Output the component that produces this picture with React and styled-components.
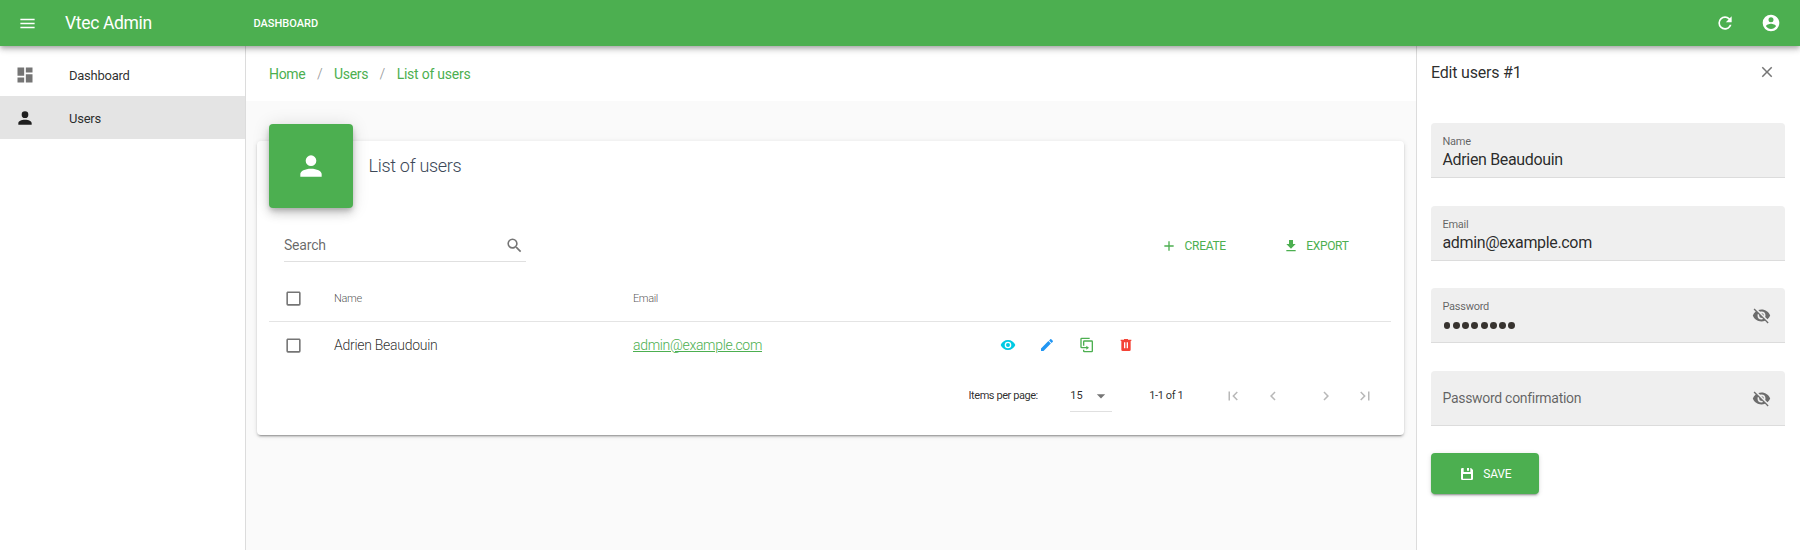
import React from "react";
import styled, { createGlobalStyle } from "styled-components";

const GREEN = "#4caf50";

const GlobalStyle = createGlobalStyle`
  *, *::before, *::after { box-sizing: border-box; }
  body {
    margin: 0;
    background: #fafafa;
    font-family: Roboto, "Liberation Sans", sans-serif;
    overflow: hidden;
  }
`;

const PATHS = {
  menu: "M3,6H21V8H3V6M3,11H21V13H3V11M3,16H21V18H3V16Z",
  dashboard: "M13,3V9H21V3M13,21H21V11H13M3,21H11V15H3M3,13H11V3H3V13Z",
  account:
    "M12,4A4,4 0 0,1 16,8A4,4 0 0,1 12,12A4,4 0 0,1 8,8A4,4 0 0,1 12,4M12,14C16.42,14 20,15.79 20,18V20H4V18C4,15.79 7.58,14 12,14Z",
  refresh:
    "M17.65,6.35C16.2,4.9 14.21,4 12,4A8,8 0 0,0 4,12A8,8 0 0,0 12,20C15.73,20 18.84,17.45 19.73,14H17.65C16.83,16.33 14.61,18 12,18A6,6 0 0,1 6,12A6,6 0 0,1 12,6C13.66,6 15.14,6.69 16.22,7.78L13,11H20V4L17.65,6.35Z",
  accountCircle:
    "M12,19.2C9.5,19.2 7.29,17.92 6,16C6.03,14 10,12.9 12,12.9C14,12.9 17.97,14 18,16C16.71,17.92 14.5,19.2 12,19.2M12,5A3,3 0 0,1 15,8A3,3 0 0,1 12,11A3,3 0 0,1 9,8A3,3 0 0,1 12,5M12,2A10,10 0 0,0 2,12A10,10 0 0,0 12,22A10,10 0 0,0 22,12C22,6.47 17.5,2 12,2Z",
  magnify:
    "M9.5,3A6.5,6.5 0 0,1 16,9.5C16,11.11 15.41,12.59 14.44,13.73L14.71,14H15.5L20.5,19L19,20.5L14,15.5V14.71L13.73,14.44C12.59,15.41 11.11,16 9.5,16A6.5,6.5 0 0,1 3,9.5A6.5,6.5 0 0,1 9.5,3M9.5,5C7,5 5,7 5,9.5C5,12 7,14 9.5,14C12,14 14,12 14,9.5C14,7 12,5 9.5,5Z",
  checkbox:
    "M19,3H5C3.89,3 3,3.89 3,5V19A2,2 0 0,0 5,21H19A2,2 0 0,0 21,19V5C21,3.89 20.1,3 19,3M19,5V19H5V5H19Z",
  plus: "M19,13H13V19H11V13H5V11H11V5H13V11H19V13Z",
  download: "M5,20H19V18H5M19,9H15V3H9V9H5L12,16L19,9Z",
  eye: "M12,9A3,3 0 0,0 9,12A3,3 0 0,0 12,15A3,3 0 0,0 15,12A3,3 0 0,0 12,9M12,17A5,5 0 0,1 7,12A5,5 0 0,1 12,7A5,5 0 0,1 17,12A5,5 0 0,1 12,17M12,4.5C7,4.5 2.73,7.61 1,12C2.73,16.39 7,19.5 12,19.5C17,19.5 21.27,16.39 23,12C21.27,7.61 17,4.5 12,4.5Z",
  eyeOff:
    "M11.83,9L15,12.16C15,12.11 15,12.05 15,12A3,3 0 0,0 12,9C11.94,9 11.89,9 11.83,9M7.53,9.8L9.08,11.35C9.03,11.56 9,11.77 9,12A3,3 0 0,0 12,15C12.22,15 12.44,14.97 12.65,14.92L14.2,16.47C13.53,16.8 12.79,17 12,17A5,5 0 0,1 7,12C7,11.21 7.2,10.47 7.53,9.8M2,4.27L4.28,6.55L4.73,7C3.08,8.3 1.78,10 1,12C2.73,16.39 7,19.5 12,19.5C13.55,19.5 15.03,19.2 16.38,18.66L16.81,19.08L19.73,22L21,20.73L3.27,3M12,7A5,5 0 0,1 17,12C17,12.64 16.87,13.26 16.64,13.82L19.57,16.75C21.07,15.5 22.27,13.86 23,12C21.27,7.61 17,4.5 12,4.5C10.6,4.5 9.26,4.75 8,5.2L10.17,7.35C10.74,7.13 11.35,7 12,7Z",
  pencil:
    "M20.71,7.04C21.1,6.65 21.1,6 20.71,5.63L18.37,3.29C18,2.9 17.35,2.9 16.96,3.29L15.12,5.12L18.87,8.87M3,17.25V21H6.75L17.81,9.93L14.06,6.18L3,17.25Z",
  duplicate:
    "M11,17H4A2,2 0 0,1 2,15V3A2,2 0 0,1 4,1H16V3H4V15H11V13L15,16L11,19V17M19,21V7H8V13H6V7A2,2 0 0,1 8,5H19A2,2 0 0,1 21,7V21A2,2 0 0,1 19,23H8A2,2 0 0,1 6,21V19H8V21H19Z",
  trash:
    "M9,3V4H4V6H5V19A2,2 0 0,0 7,21H17A2,2 0 0,0 19,19V6H20V4H15V3H9M9,8H11V17H9V8M13,8H15V17H13V8Z",
  menuDown: "M7,10L12,15L17,10H7Z",
  first: "M18.41,16.59L13.82,12L18.41,7.41L17,6L11,12L17,18L18.41,16.59M6,6H8V18H6V6Z",
  prev: "M15.41,16.58L10.83,12L15.41,7.41L14,6L8,12L14,18L15.41,16.58Z",
  next: "M8.59,16.58L13.17,12L8.59,7.41L10,6L16,12L10,18L8.59,16.58Z",
  last: "M5.59,7.41L10.18,12L5.59,16.59L7,18L13,12L7,6L5.59,7.41M16,6H18V18H16V6Z",
  close:
    "M19,6.41L17.59,5L12,10.59L6.41,5L5,6.41L10.59,12L5,17.59L6.41,19L12,13.41L17.59,19L19,17.59L13.41,12L19,6.41Z",
  save: "M3,5A2,2 0 0,1 5,3H7V9H17V3H18L21,6V19A2,2 0 0,1 19,21H5A2,2 0 0,1 3,19V5M6,12V19H18V12H6M12,3H15V7H12V3Z",
};

const Svg = styled.svg`
  display: block;
  flex: none;
  width: ${(p) => p.$size}px;
  height: ${(p) => p.$size}px;
  fill: ${(p) => p.$color || "currentColor"};
`;

const Icon = ({ name, size = 20, color }) => (
  <Svg viewBox="0 0 24 24" $size={size} $color={color} aria-hidden="true">
    <path fillRule="evenodd" d={PATHS[name]} />
  </Svg>
);

const Text = styled.span`
  font-size: ${(p) => p.$size}px;
  font-weight: ${(p) => p.$weight || 400};
  letter-spacing: ${(p) => p.$track || 0}px;
  color: ${(p) => p.$color || "inherit"};
  line-height: 20px;
  padding-top: ${(p) => p.$drop || 0}px;
  white-space: nowrap;
`;

const Page = styled.div`
  display: flex;
  flex-direction: column;
  width: 1800px;
  height: 550px;
  color: rgba(0, 0, 0, 0.84);
`;

const TopBar = styled.header`
  position: relative;
  z-index: 2;
  flex: none;
  display: flex;
  align-items: center;
  height: 46px;
  padding: 0 19px 0 17.5px;
  background: ${GREEN};
  color: #fff;
  box-shadow: 0 2px 4px -1px rgba(0, 0, 0, 0.2), 0 4px 5px rgba(0, 0, 0, 0.14),
    0 1px 10px rgba(0, 0, 0, 0.12);
`;

const Brand = styled.div`
  width: 188.5px;
  margin-left: 28.5px;
  display: flex;
`;

const TopActions = styled.div`
  display: flex;
  align-items: center;
  gap: 26px;
  margin-left: auto;
`;

const Body = styled.div`
  flex: 1;
  display: flex;
  min-height: 0;
`;

const Sidebar = styled.nav`
  flex: none;
  width: 246px;
  padding-top: 7px;
  background: #fff;
  border-right: 1px solid #dcdcdc;
`;

const NavItem = styled.a`
  display: flex;
  align-items: center;
  gap: 34px;
  height: 43px;
  padding-left: 15px;
  background: ${(p) => (p.$active ? "#e4e4e4" : "transparent")};
`;

const Main = styled.main`
  flex: 1;
  display: flex;
  flex-direction: column;
`;

const Breadcrumbs = styled.div`
  display: flex;
  align-items: center;
  height: 55px;
  padding-left: 23px;
  background: #fff;
  color: ${GREEN};
`;

const Slash = styled.span`
  width: 28.6px;
  text-align: center;
  font-size: 14px;
  color: rgba(0, 0, 0, 0.38);
`;

const Card = styled.section`
  margin: 40px 12px 0 11px;
  height: 294px;
  padding: 0 13px 0 12px;
  background: #fff;
  border-radius: 4px;
  box-shadow: 0 3px 1px -2px rgba(0, 0, 0, 0.2), 0 2px 2px rgba(0, 0, 0, 0.14),
    0 1px 5px rgba(0, 0, 0, 0.12);
`;

const CardHead = styled.div`
  display: flex;
  gap: 15.5px;
  height: 67px;
`;

const Badge = styled.div`
  display: flex;
  align-items: center;
  justify-content: center;
  width: 84px;
  height: 84px;
  margin-top: -17px;
  background: ${GREEN};
  border-radius: 4px;
  box-shadow: 0 3px 5px -1px rgba(0, 0, 0, 0.2), 0 6px 10px rgba(0, 0, 0, 0.14),
    0 1px 18px rgba(0, 0, 0, 0.12);
`;

const CardTitle = styled.h2`
  margin: 15px 0 0;
  font-size: 18px;
  line-height: 20px;
  font-weight: 300;
  letter-spacing: -0.3px;
  color: #3c4858;
`;

const Toolbar = styled.div`
  display: flex;
  align-items: center;
  height: 69px;
  padding: 6px 42.5px 0 15px;
`;

const SearchBox = styled.div`
  display: flex;
  align-items: center;
  justify-content: space-between;
  width: 242px;
  height: 33px;
  padding-right: 2px;
  border-bottom: 1px solid #e0e0e0;
`;

const ToolButtons = styled.div`
  display: flex;
  gap: 57px;
  margin-left: auto;
  color: ${GREEN};
`;

const ToolButton = styled.button`
  display: flex;
  align-items: center;
  gap: 7.5px;
  padding: 0;
  border: 0;
  background: none;
  color: inherit;
  font-family: inherit;
`;

const Row = styled.div`
  display: grid;
  grid-template-columns: 50px 299px 367px 1fr;
  align-items: center;
  height: ${(p) => p.$height}px;
  padding-left: 15px;
  padding-bottom: ${(p) => (p.$line ? 1 : 0)}px;
  border-bottom: ${(p) => (p.$line ? "1px solid #e4e4e4" : "0")};
`;

const EmailLink = styled.a`
  font-size: 14px;
  font-weight: 300;
  letter-spacing: -0.31px;
  color: ${GREEN};
  text-decoration: underline;
`;

const RowActions = styled.div`
  display: flex;
  align-items: center;
  gap: 23.3px;
`;

const Pager = styled.div`
  display: flex;
  align-items: center;
  height: 56px;
  padding-left: 699.5px;
`;

const PageSize = styled.div`
  display: flex;
  align-items: center;
  justify-content: space-between;
  width: 42px;
  height: 32px;
  margin: 0 37px 0 32.5px;
  padding-right: 1px;
  border-bottom: 1px solid #e0e0e0;
`;

const PageNav = styled.div`
  display: flex;
  align-items: center;
  margin-left: 41.2px;
  gap: 21.4px;
`;

const NavGap = styled.span`
  width: 13.6px;
  margin-left: -21.4px;
`;

const Drawer = styled.aside`
  flex: none;
  width: 384px;
  padding: 0 15px 0 14px;
  background: #fff;
  border-left: 1px solid #dcdcdc;
`;

const DrawerHead = styled.div`
  display: flex;
  align-items: center;
  justify-content: space-between;
  height: 52px;
  padding-right: 9px;
  margin-bottom: 25px;
`;

const FieldList = styled.div`
  display: flex;
  flex-direction: column;
  gap: 27.7px;
`;

const Field = styled.div`
  display: flex;
  align-items: center;
  justify-content: space-between;
  height: 55px;
  padding: 1px 14px 0 11.5px;
  background: #efefef;
  border-bottom: 1px solid #dcdcdc;
  border-radius: 4px 4px 0 0;
`;

const FieldText = styled.div`
  display: flex;
  flex-direction: column;
  padding-top: ${(p) => (p.$filled ? 3 : 0)}px;
  padding-bottom: ${(p) => (p.$filled ? 0 : 1)}px;
`;

const FieldLabel = styled.label`
  font-size: ${(p) => (p.$small ? 11 : 14)}px;
  line-height: ${(p) => (p.$small ? 16 : 20)}px;
  letter-spacing: ${(p) => (p.$small ? -0.27 : -0.3)}px;
  color: rgba(0, 0, 0, 0.6);
`;

const Dots = styled.div`
  display: flex;
  align-items: center;
  gap: 2.4px;
  height: 20px;
  padding: 1px 0 0 1px;
`;

const Dot = styled.i`
  width: 6.9px;
  height: 6.9px;
  border-radius: 50%;
  background: #37332f;
`;

const SaveButton = styled.button`
  display: flex;
  align-items: center;
  justify-content: center;
  gap: 8.5px;
  width: 108px;
  height: 41px;
  margin-top: 27px;
  padding: 0;
  border: 0;
  border-radius: 4px;
  background: ${GREEN};
  color: #fff;
  font-family: inherit;
  box-shadow: 0 3px 1px -2px rgba(0, 0, 0, 0.2), 0 2px 2px rgba(0, 0, 0, 0.14),
    0 1px 5px rgba(0, 0, 0, 0.12);
`;

const ROW_ICONS = [
  ["eye", "#00cae3"],
  ["pencil", "#2196f3"],
  ["duplicate", GREEN],
  ["trash", "#f44336"],
];

const FormField = ({ label, value, dots, secret }) => (
  <Field>
    <FieldText $filled={Boolean(value || dots)}>
      <FieldLabel $small={Boolean(value || dots)}>{label}</FieldLabel>
      {value && <Text $size={16} $track={-0.34}>{value}</Text>}
      {dots && (
        <Dots>
          {Array.from({ length: dots }, (_, i) => (
            <Dot key={i} />
          ))}
        </Dots>
      )}
    </FieldText>
    {secret && <Icon name="eyeOff" size={19} color="#6c6c6c" />}
  </Field>
);

export default function App() {
  return (
    <Page>
      <GlobalStyle />
      <TopBar>
        <Icon name="menu" size={19} />
        <Brand>
          <Text $size={17.5} $track={-0.34}>Vtec Admin</Text>
        </Brand>
        <Text $size={11} $weight={500} $drop={2}>DASHBOARD</Text>
        <TopActions>
          <Icon name="refresh" size={20} />
          <Icon name="accountCircle" size={20} />
        </TopActions>
      </TopBar>
      <Body>
        <Sidebar>
          <NavItem>
            <Icon name="dashboard" size={20} color="#757575" />
            <Text $size={13} $track={-0.25} $drop={2}>Dashboard</Text>
          </NavItem>
          <NavItem $active>
            <Icon name="account" size={20} color="#1f1f1f" />
            <Text $size={13} $track={-0.25} $drop={2}>Users</Text>
          </NavItem>
        </Sidebar>
        <Main>
          <Breadcrumbs>
            <Text $size={14} $track={-0.3}>Home</Text>
            <Slash>/</Slash>
            <Text $size={14} $track={-0.35}>Users</Text>
            <Slash>/</Slash>
            <Text $size={14} $track={-0.23}>List of users</Text>
          </Breadcrumbs>
          <Card>
            <CardHead>
              <Badge>
                <Icon name="account" size={32} color="#fff" />
              </Badge>
              <CardTitle>List of users</CardTitle>
            </CardHead>
            <Toolbar>
              <SearchBox>
                <Text $size={14} $track={-0.2} $color="rgba(0,0,0,.6)">Search</Text>
                <Icon name="magnify" size={19} color="#757575" />
              </SearchBox>
              <ToolButtons>
                <ToolButton>
                  <Icon name="plus" size={16} />
                  <Text $size={12} $track={-0.33}>CREATE</Text>
                </ToolButton>
                <ToolButton>
                  <Icon name="download" size={16} />
                  <Text $size={12} $track={-0.33}>EXPORT</Text>
                </ToolButton>
              </ToolButtons>
            </Toolbar>
            <Row $height={45} $line>
              <Icon name="checkbox" size={19} color="#757575" />
              <Text $size={11} $weight={300} $track={-0.3} $color="rgba(0,0,0,.7)">Name</Text>
              <Text $size={11} $weight={300} $track={-0.4} $drop={1} $color="rgba(0,0,0,.7)">Email</Text>
            </Row>
            <Row $height={46}>
              <Icon name="checkbox" size={19} color="#757575" />
              <Text $size={14} $weight={300} $track={-0.28}>Adrien Beaudouin</Text>
              <EmailLink>admin@example.com</EmailLink>
              <RowActions>
                {ROW_ICONS.map(([name, color]) => (
                  <Icon key={name} name={name} size={16} color={color} />
                ))}
              </RowActions>
            </Row>
            <Pager>
              <Text $size={11} $track={-0.43}>Items per page:</Text>
              <PageSize>
                <Text $size={11}>15</Text>
                <Icon name="menuDown" size={20} color="#757575" />
              </PageSize>
              <Text $size={11} $track={-0.4}>1-1 of 1</Text>
              <PageNav>
                <Icon name="first" size={18} color="#b8b8b8" />
                <Icon name="prev" size={18} color="#b8b8b8" />
                <NavGap />
                <Icon name="next" size={18} color="#b8b8b8" />
                <Icon name="last" size={18} color="#b8b8b8" />
              </PageNav>
            </Pager>
          </Card>
        </Main>
        <Drawer>
          <DrawerHead>
            <Text $size={16} $track={-0.2} $drop={1}>Edit users #1</Text>
            <Icon name="close" size={18} color="#757575" />
          </DrawerHead>
          <FieldList>
            <FormField label="Name" value="Adrien Beaudouin" />
            <FormField label="Email" value="admin@example.com" />
            <FormField label="Password" dots={8} secret />
            <FormField label="Password confirmation" secret />
          </FieldList>
          <SaveButton>
            <Icon name="save" size={16} />
            <Text $size={12} $track={-0.25}>SAVE</Text>
          </SaveButton>
        </Drawer>
      </Body>
    </Page>
  );
}
